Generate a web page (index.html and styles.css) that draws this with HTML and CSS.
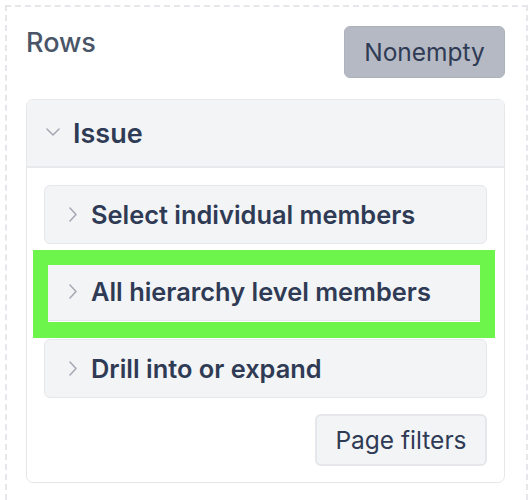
FILE: index.html
```html
<!DOCTYPE html>
<html>
<head>
<meta charset="utf-8">
<link rel="stylesheet" href="styles.css">
</head>
<body>
<div class="panel">
  <div class="panel-head">
    <h2 class="title">Rows</h2>
    <button class="btn btn-active">Nonempty</button>
  </div>
  <div class="card">
    <div class="card-head">
      <svg class="chev-down" width="14" height="8" viewBox="0 0 14 8"><path d="M1 1l6 6 6-6" fill="none" stroke="#a3a8b3" stroke-width="1.5" stroke-linecap="round" stroke-linejoin="round"/></svg>
      <span class="card-title">Issue</span>
    </div>
    <div class="card-body">
      <div class="item">
        <svg class="chev-right" width="8" height="15" viewBox="0 0 8 15"><path d="M1 1l6 6.5-6 6.5" fill="none" stroke="#a3a8b3" stroke-width="1.5" stroke-linecap="round" stroke-linejoin="round"/></svg>
        <span>Select individual members</span>
      </div>
      <div class="item item-marked">
        <svg class="chev-right" width="8" height="15" viewBox="0 0 8 15"><path d="M1 1l6 6.5-6 6.5" fill="none" stroke="#a3a8b3" stroke-width="1.5" stroke-linecap="round" stroke-linejoin="round"/></svg>
        <span>All hierarchy level members</span>
        <div class="highlight"></div>
      </div>
      <div class="item">
        <svg class="chev-right" width="8" height="15" viewBox="0 0 8 15"><path d="M1 1l6 6.5-6 6.5" fill="none" stroke="#a3a8b3" stroke-width="1.5" stroke-linecap="round" stroke-linejoin="round"/></svg>
        <span>Drill into or expand</span>
      </div>
      <div class="foot">
        <button class="btn btn-light">Page filters</button>
      </div>
    </div>
  </div>
</div>
</body>
</html>
```
FILE: styles.css
```css
* { box-sizing: border-box; }
html, body { margin: 0; padding: 0; background: #fff; }
body {
  font-family: Inter, "Noto Sans", sans-serif;
  color: #2f3b55;
  height: 500px;
  overflow: hidden;
}
.panel {
  margin: 5px 0 0 5px;
  border: 2px dashed #e6e7eb;
  border-bottom: none;
  padding: 19px 21px 0 19px;
  height: 495px;
}
.panel-head {
  display: flex;
  justify-content: space-between;
  align-items: flex-start;
  margin-bottom: 21px;
}
.title {
  margin: 0;
  font-size: 27px;
  font-weight: 500;
  color: #4a5568;
  line-height: 33px;
}
.btn {
  font-family: Inter, "Noto Sans", sans-serif;
  font-size: 24.5px;
  line-height: 30px;
  border-radius: 6px;
  color: #2f3b55;
  cursor: pointer;
}
.btn-active {
  width: 161px;
  height: 52px;
  background: #b5b9c3;
  border: 1px solid #adb2bc;
}
.card {
  border: 1px solid #e6e7eb;
  border-radius: 7px;
}
.card-head {
  height: 68px;
  background: #f3f4f6;
  border-bottom: 2px solid #e8e9ec;
  border-radius: 7px 7px 0 0;
  display: flex;
  align-items: center;
  padding-left: 19px;
}
.chev-down { margin-right: 13px; margin-top: -2px; }
.card-title {
  font-size: 27px;
  font-weight: 600;
  color: #2f3b55;
}
.card-body {
  padding: 17px 17px 16px 17px;
  display: flex;
  flex-direction: column;
  gap: 18px;
}
.item {
  position: relative;
  height: 59px;
  background: #f3f4f6;
  border: 1px solid #e6e7eb;
  border-radius: 6px;
  display: flex;
  align-items: center;
  padding-left: 24px;
  font-size: 25.4px;
  font-weight: 600;
  color: #2f3b55;
}
.chev-right { margin-right: 14px; }
.highlight {
  position: absolute;
  left: -12px;
  top: -13px;
  width: 462px;
  height: 88px;
  border: 15px solid #6ef54b;
  border-bottom-width: 16px;
  pointer-events: none;
}
.foot {
  display: flex;
  justify-content: flex-end;
  margin-top: -2px;
}
.btn-light {
  width: 172px;
  height: 52px;
  background: #f3f4f6;
  border: 2px solid #e6e7eb;
  font-weight: 400;
}
```
